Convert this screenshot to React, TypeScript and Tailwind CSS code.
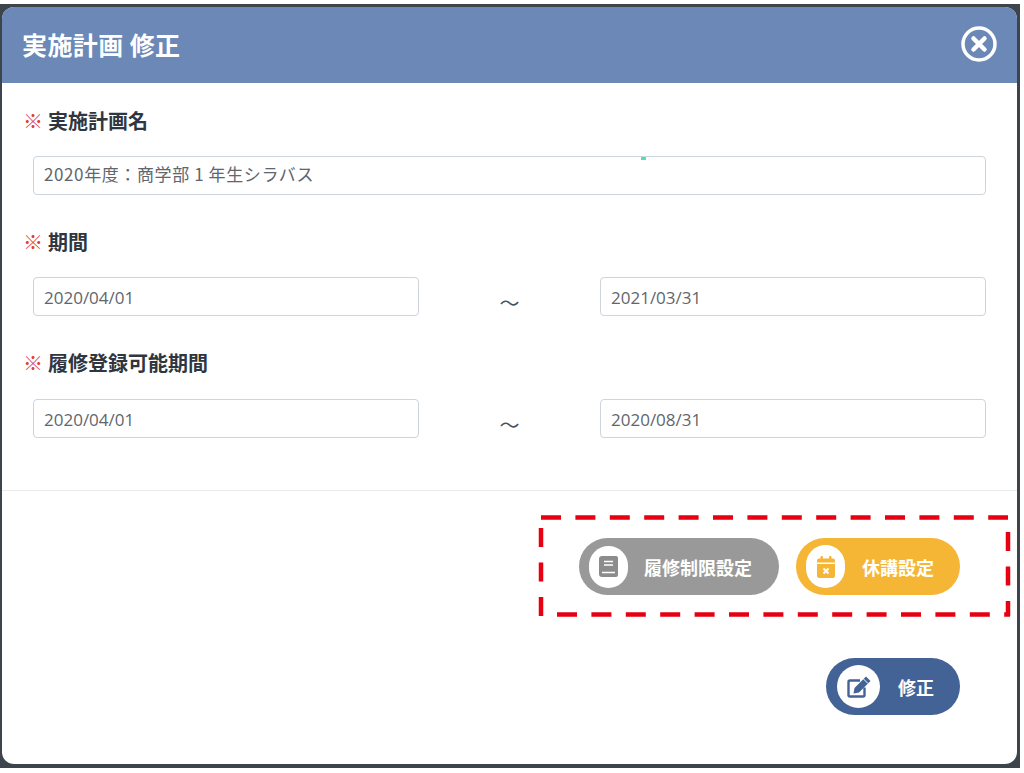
import React from "react";

const fontCls = "font-['Noto_Sans_CJK_JP','Noto_Sans',sans-serif]";

function Label({ text }: { text: string }) {
  return (
    <div className="flex items-center h-[24px] pl-[21px] text-[20px] font-bold leading-none text-[#2f3640]">
      <span className="text-[#e0403c] font-normal text-[20px] mr-[5px]">※</span>
      {text}
    </div>
  );
}

function Field({ value, className }: { value: string; className: string }) {
  return (
    <div className={"h-[39px] flex items-center border border-[#ced4da] rounded-[4px] pl-[10px] text-[17px] text-[#5f666d] " + className}>
      {value}
    </div>
  );
}

function DateRange({ from, to }: { from: string; to: string }) {
  return (
    <div className="flex items-center h-[39px] pl-[31px]">
      <Field value={from} className="w-[386px] font-['Open_Sans',sans-serif] pt-[2px]" />
      <span className="w-[181px] text-center text-[20px] leading-none text-[#4b5158] pt-[12px]">～</span>
      <Field value={to} className="w-[386px] font-['Open_Sans',sans-serif] pt-[2px]" />
    </div>
  );
}

function BookIcon({ color }: { color: string }) {
  return (
    <svg width="19" height="21" viewBox="0 0 19 21">
      <path d="M3 0H17A2 2 0 0 1 19 2V19A2 2 0 0 1 17 21H3A3 3 0 0 1 0 18V3A3 3 0 0 1 3 0Z" fill={color} />
      <path d="M5 5.500H14M5 9H14M3 16.500H16" stroke="#fff" strokeWidth="1.500" fill="none" />
    </svg>
  );
}

function CalendarIcon({ color }: { color: string }) {
  return (
    <svg width="18" height="22" viewBox="0 0 18 22">
      <path d="M0 4.500A2 2 0 0 1 2 2.500H16A2 2 0 0 1 18 4.500V6.500H0Z" fill={color} />
      <path d="M0 8H18V20A2 2 0 0 1 16 22H2A2 2 0 0 1 0 20Z" fill={color} />
      <rect x="3.500" y="0" width="2.500" height="4.500" rx="1" fill={color} />
      <rect x="12" y="0" width="2.500" height="4.500" rx="1" fill={color} />
      <path d="M6.500 12.500L11.500 17.500M11.500 12.500L6.500 17.500" stroke="#fff" strokeWidth="2" />
    </svg>
  );
}

function EditIcon({ color }: { color: string }) {
  return (
    <svg width="24" height="22" viewBox="0 0 24 22">
      <path d="M13 4.500H3A1.500 1.500 0 0 0 1.500 6V19A1.500 1.500 0 0 0 3 20.500H16A1.500 1.500 0 0 0 17.500 19V11.500" stroke={color} strokeWidth="2.400" fill="none" />
      <path d="M19 0.500L23.500 5L12 16.500L6.500 17.500L7.500 12Z" fill={color} />
      <path d="M16.500 3L21 7.500" stroke="#fff" strokeWidth="1" />
    </svg>
  );
}

function PillButton({ label, bg, icon, className, labelClass, circleClass }: { label: string; bg: string; icon: React.ReactNode; className: string; labelClass: string; circleClass: string }) {
  return (
    <button className={"h-[57px] rounded-full flex items-center text-white font-bold text-[18px] " + bg + " " + className}>
      <span className={"rounded-full bg-white flex items-center justify-center shrink-0 " + circleClass}>{icon}</span>
      <span className={"pt-[2px] " + labelClass}>{label}</span>
    </button>
  );
}

export default function App() {
  return (
    <div className={"w-[1024px] h-[773px] bg-white pt-[4px] overflow-hidden " + fontCls}>
      <div className="w-[1020px] h-[764px] bg-[#3d444c] pt-[3px] pl-[2px]">
        <div className="relative w-[1015px] h-[757px] bg-white rounded-[12px] overflow-hidden">
          <div className="h-[76px] bg-[#6b88b6] flex items-center justify-between pl-[20px] pr-[20px]">
            <h1 className="text-[25px] font-bold tracking-[0.4px] text-white">実施計画 修正</h1>
            <svg className="mb-[2px]" width="36" height="36" viewBox="0 0 36 36" fill="none">
              <circle cx="18" cy="18" r="16" stroke="#fff" strokeWidth="3.500" />
              <path d="M12.500 12.500L23.500 23.500M23.500 12.500L12.500 23.500" stroke="#fff" strokeWidth="4.500" strokeLinecap="round" />
            </svg>
          </div>

          <div className="h-[408px] border-b border-[#e9ecef] pt-[26px]">
            <Label text="実施計画名" />
            <div className="pl-[31px] pt-[23px]">
              <Field value="2020年度：商学部 1 年生シラバス" className="w-[953px] tracking-[0.6px] pb-[3px]" />
            </div>
            <div className="mt-[35px]"><Label text="期間" /></div>
            <div className="pt-[23px]"><DateRange from="2020/04/01" to="2021/03/31" /></div>
            <div className="mt-[35px]"><Label text="履修登録可能期間" /></div>
            <div className="pt-[24px]"><DateRange from="2020/04/01" to="2020/08/31" /></div>
          </div>

          <div className="flex justify-end pr-[57px] pt-[47px] gap-[17px]">
            <PillButton label="履修制限設定" bg="bg-[#999999]" className="w-[200px] pl-[10px]" circleClass="w-[39px] h-[42px]" labelClass="ml-[16px]" icon={<BookIcon color="#8c8c8c" />} />
            <PillButton label="休講設定" bg="bg-[#f6b635]" className="w-[164px] pl-[10px]" circleClass="w-[39px] h-[43px]" labelClass="ml-[17px]" icon={<CalendarIcon color="#f6b635" />} />
          </div>
          <div className="flex justify-end pr-[57px] pt-[63px]">
            <PillButton label="修正" bg="bg-[#436296]" className="w-[134px] pl-[11px]" circleClass="w-[43px] h-[43px]" labelClass="ml-[18px]" icon={<EditIcon color="#436296" />} />
          </div>

          <svg className="absolute left-[535px] top-[506px]" width="480" height="106" fill="none" stroke="#e60012" strokeWidth="4.500" strokeDasharray="20 14.400">
            <path d="M4 4.500H471" />
            <path d="M20 101.500H473" />
            <path d="M4 15V103" strokeDasharray="19 15.500" />
            <path d="M471 19V103" strokeDasharray="19 15.500" />
          </svg>
          <div className="absolute left-[639px] top-[150px] w-[5px] h-[3px] bg-[#4fe3a8]" />
        </div>
      </div>
    </div>
  );
}
